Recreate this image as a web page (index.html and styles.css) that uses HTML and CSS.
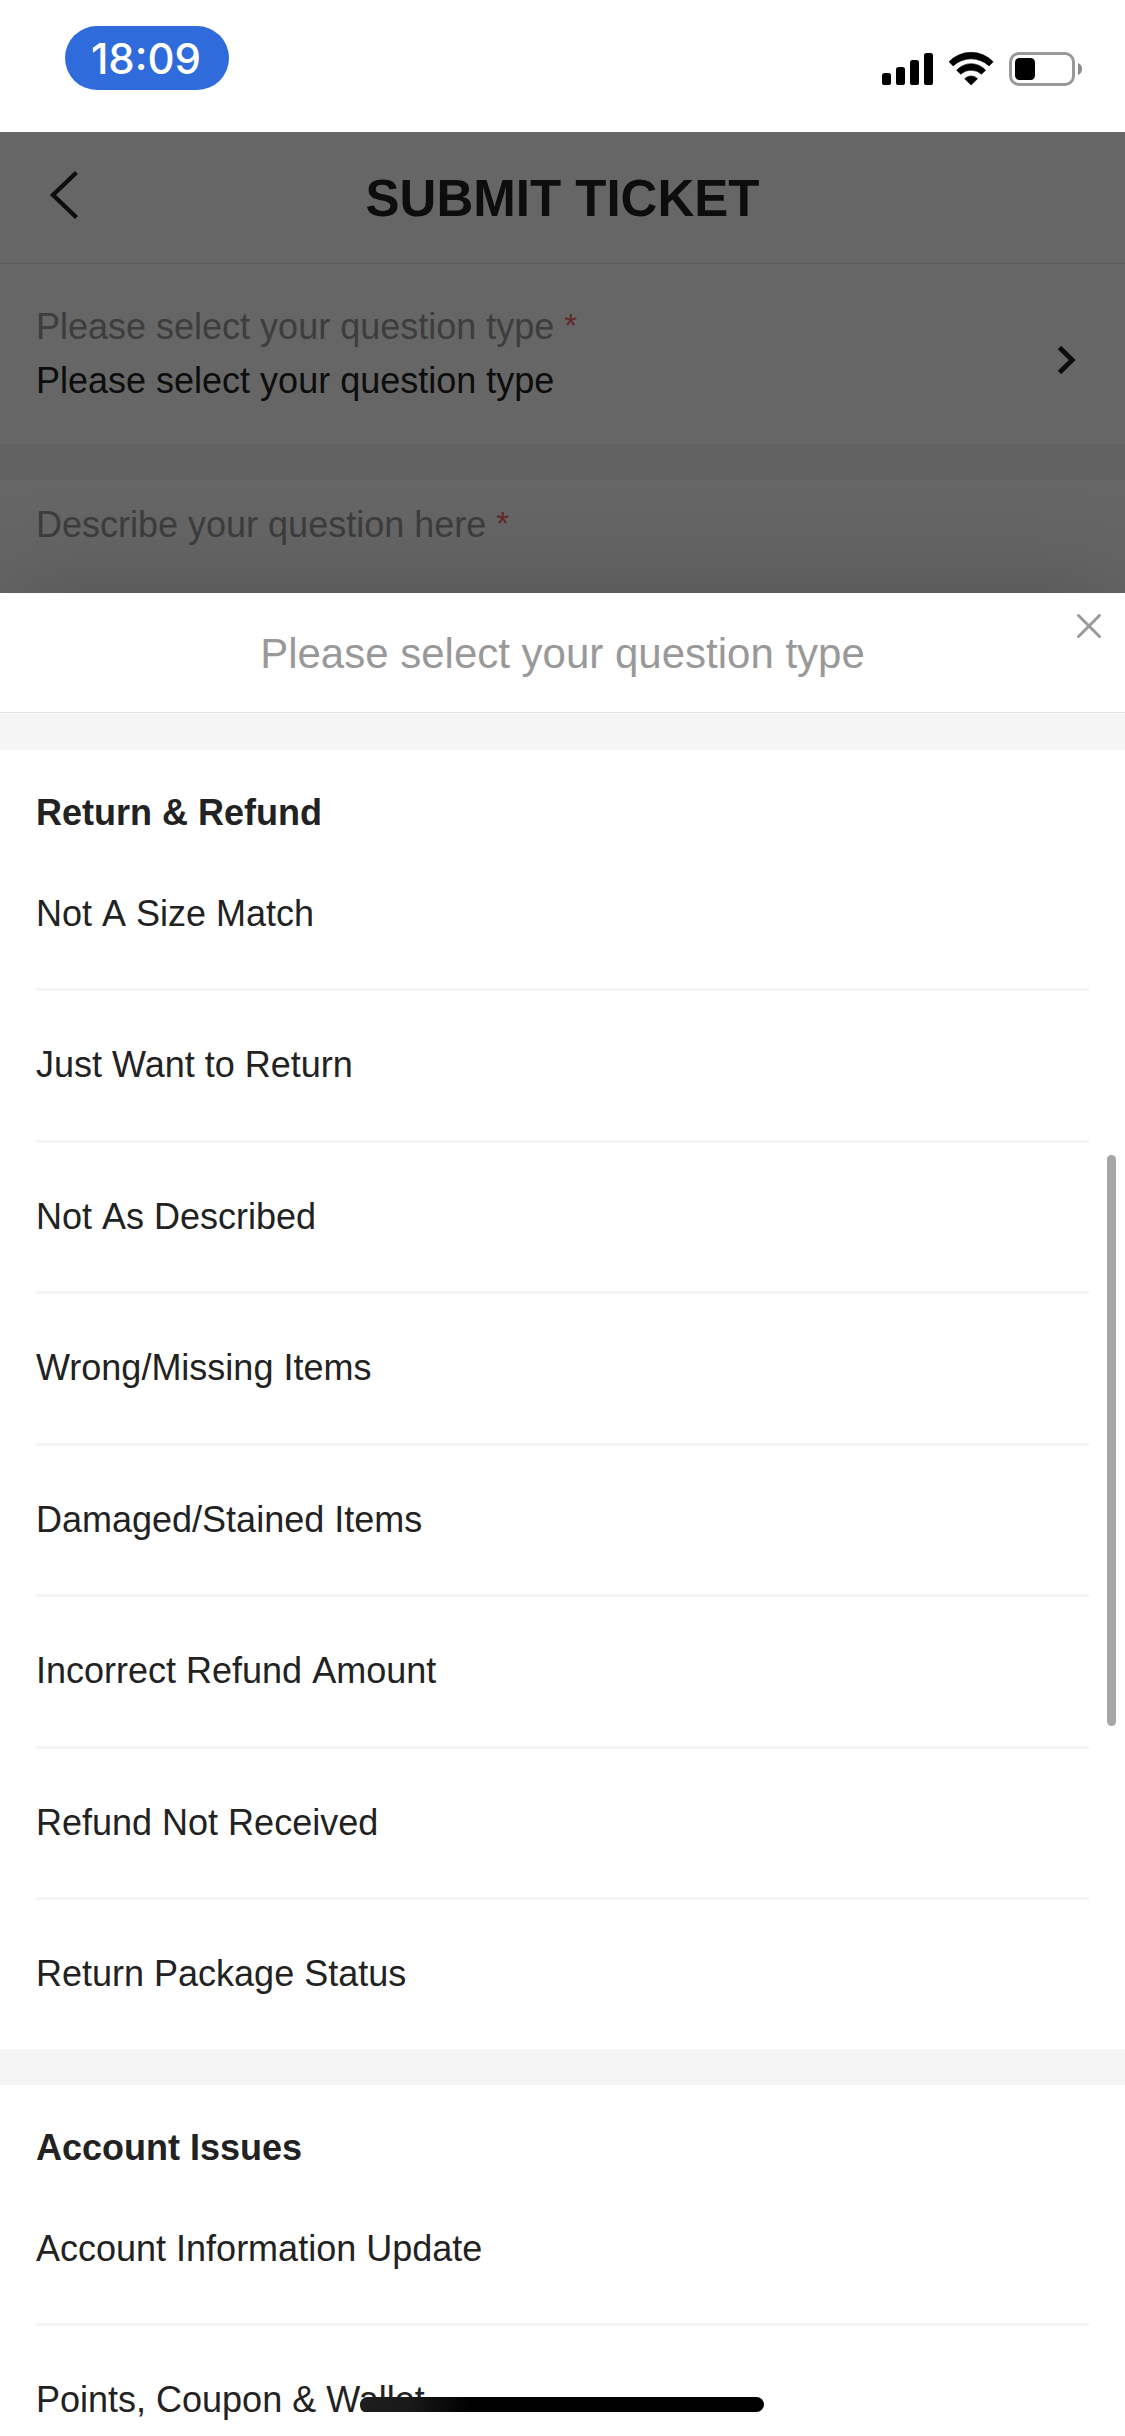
FILE: index.html
```html
<!DOCTYPE html>
<html lang="en">
<head>
<meta charset="utf-8">
<title>Submit Ticket</title>
<link rel="stylesheet" href="styles.css">
</head>
<body>
<div class="screen">
  <header class="status-bar">
    <div class="time">18:09</div>
    <svg class="status-icons" width="202" height="36" viewBox="0 0 202 36">
      <rect x="1" y="22" width="9" height="12" rx="2.6"/>
      <rect x="15" y="16" width="9" height="18" rx="2.6"/>
      <rect x="29" y="9" width="9" height="25" rx="2.6"/>
      <rect x="43" y="2" width="9" height="32" rx="2.6"/>
      <g stroke="#000" stroke-width="0.6" stroke-linejoin="round">
        <path d="M68 10.8 A30.6 30.6 0 0 1 112.2 10.8 L108 14.9 A26.3 26.3 0 0 0 72.2 14.9 Z"/>
        <path d="M75.6 19.3 A19.2 19.2 0 0 1 104.6 19.3 L100.4 23.2 A15.2 15.2 0 0 0 79.8 23.2 Z"/>
        <path d="M83.6 27.7 A9 9 0 0 1 96.6 27.7 L90.1 34 Z"/>
      </g>
      <rect x="129.5" y="2.5" width="63" height="31" rx="8.5" fill="none" stroke="#999" stroke-width="3"/>
      <rect x="134" y="7" width="20" height="22" rx="4.5"/>
      <path d="M197 12 Q201 13.5 201 18 T197 24 Z" fill="#8c8c8c"/>
    </svg>
  </header>
  <main class="page">
    <div class="nav">
      <svg class="back" width="32" height="52" viewBox="0 0 32 52"><path d="M28.5 3.5 L5 26 L28.5 48.5" fill="none" stroke="#222" stroke-width="4.4"/></svg>
      <h1 class="nav-title">SUBMIT TICKET</h1>
    </div>
    <section class="field field-select">
      <div>
        <div class="label">Please select your question type <span class="required">*</span></div>
        <div class="value">Please select your question type</div>
      </div>
      <svg class="chevron" width="22" height="32" viewBox="0 0 22 32"><path d="M3.5 3.5 L16.2 16 L3.5 28.5" fill="none" stroke="#222" stroke-width="4.8"/></svg>
    </section>
    <section class="field field-text">
      <div class="label">Describe your question here <span class="required">*</span></div>
    </section>
    <div class="overlay"></div>
  </main>
  <div class="sheet">
    <div class="sheet-header">
      <h2 class="sheet-title">Please select your question type</h2>
      <svg class="close" width="26" height="26" viewBox="0 0 26 26"><path d="M2.5 2.5 L23.5 23.5 M23.5 2.5 L2.5 23.5" fill="none" stroke="#999" stroke-width="3" stroke-linecap="round"/></svg>
    </div>
    <section class="group">
      <h3 class="group-title">Return &amp; Refund</h3>
      <ul class="options">
        <li class="unkerned">Not A Size Match</li>
        <li>Just Want to Return</li>
        <li class="unkerned">Not As Described</li>
        <li>Wrong/Missing Items</li>
        <li>Damaged/Stained Items</li>
        <li class="unkerned">Incorrect Refund Amount</li>
        <li>Refund Not Received</li>
        <li>Return Package Status</li>
      </ul>
    </section>
    <section class="group">
      <h3 class="group-title">Account Issues</h3>
      <ul class="options">
        <li>Account Information Update</li>
        <li>Points, Coupon &amp; Wallet</li>
      </ul>
    </section>
  </div>
  <div class="scrollbar"></div>
  <div class="home-indicator"></div>
</div>
</body>
</html>
```
FILE: styles.css
```css
* { box-sizing: border-box; margin: 0; padding: 0; }

body {
  background: #fff;
  color: #222;
  font-family: "Liberation Sans", Arial, sans-serif;
  font-size: 36px;
}

.screen {
  position: relative;
  width: 1125px;
  height: 2436px;
  overflow: hidden;
}

svg { display: block; flex: none; }

/* Status bar */
.status-bar {
  display: flex;
  justify-content: space-between;
  align-items: flex-start;
  height: 132px;
  padding: 26px 42px 0 65px;
}

.time {
  width: 164px;
  height: 64px;
  padding-right: 2px;
  border-radius: 32px;
  background: #2f6bda;
  color: #fff;
  font: 500 42px/65px Inter, sans-serif;
  text-align: center;
}

.status-icons { margin-top: 25px; }

/* Page behind the sheet */
.page {
  position: relative;
  height: 2304px;
  background: #fff;
}

.overlay {
  position: absolute;
  inset: 0;
  background: rgba(0, 0, 0, 0.6);
}

.nav {
  display: grid;
  grid-template-columns: 80px 1fr 80px;
  align-items: center;
  height: 132px;
  padding: 0 48px;
  border-bottom: 1px solid #e5e5e5;
}

.back { margin-bottom: 6px; }

.nav-title {
  padding-top: 2px;
  font-size: 51px;
  font-weight: 700;
  line-height: 60px;
  text-align: center;
}

.field { padding: 0 36px; }

.field-select {
  display: flex;
  justify-content: space-between;
  align-items: center;
  height: 180px;
  padding: 0 47px 0 36px;
}

.chevron { margin-top: 12px; }

.field-text {
  height: 200px;
  margin-top: 36px;
  padding-top: 18px;
  box-shadow: 0 -36px 0 #f5f5f5;
}

.label, .value { line-height: 54px; }
.label { color: #999; }

.required {
  color: #f56c6c;
  font-size: 33px;
  line-height: 1;
  vertical-align: 2px;
}

/* Bottom sheet */
.sheet {
  position: absolute;
  top: 593px;
  left: 0;
  right: 0;
  bottom: 0;
  background: #fff;
  box-shadow: 0 0 100px rgba(0, 0, 0, 0.2);
}

.sheet-header {
  position: relative;
  height: 120px;
  margin-bottom: 1px;
  border-bottom: 1px solid #e0e0e0;
}

.sheet-title {
  color: #999;
  font-size: 42px;
  font-weight: 400;
  line-height: 122px;
  height: 119px;
  text-align: center;
}

.close {
  position: absolute;
  top: 20px;
  right: 23px;
}

.group { border-top: 36px solid #f5f5f5; }

.group-title {
  height: 89.6px;
  padding-top: 36px;
  font-size: 36px;
  font-weight: 700;
  line-height: 53px;
}

.group-title, .options { margin-left: 36px; margin-right: 36px; }

.options { list-style: none; }

.options li {
  height: 151.5px;
  padding-top: 49px;
  border-bottom: 3px solid #f5f5f5;
  line-height: 50px;
}

.options li:last-child {
  height: 149px;
  border-bottom: 0;
}

.options .unkerned { font-kerning: none; }

.scrollbar {
  position: absolute;
  top: 1155px;
  right: 9px;
  width: 9px;
  height: 571px;
  border-radius: 4.5px;
  background: #a6a6a6;
}

.home-indicator {
  position: absolute;
  left: 360px;
  bottom: 24px;
  width: 404px;
  height: 15px;
  border-radius: 7.5px;
  background: linear-gradient(90deg, #1e1e1e 0, #191919 50px, #000 110px);
}
```
